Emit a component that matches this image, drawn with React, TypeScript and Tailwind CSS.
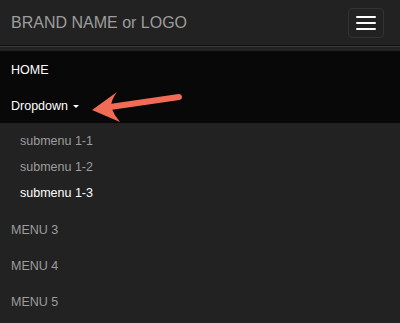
import React from 'react';

const font = { fontFamily: '"Liberation Sans", Arial, sans-serif' };

const submenu = [
  { label: 'submenu 1-1', active: false },
  { label: 'submenu 1-2', active: false },
  { label: 'submenu 1-3', active: true },
];

const App = () => {
  return (
    <div className="w-[400px] h-[323px] bg-[#222222] overflow-hidden" style={font}>
      {/* top bar */}
      <div className="h-[45px] flex items-center justify-between pl-[11px] pr-[16px]">
        <span className="text-[16px] text-[#9d9d9d] leading-none mt-[1px]">BRAND NAME or LOGO</span>
        <button className="w-[36px] h-[30px] border border-[#333333] rounded-[4px] flex flex-col items-center justify-center gap-[4px]">
          <span className="block w-[20px] h-[2px] bg-white rounded-[1px]" />
          <span className="block w-[20px] h-[2px] bg-white rounded-[1px]" />
          <span className="block w-[20px] h-[2px] bg-white rounded-[1px]" />
        </button>
      </div>

      <div className="border-t border-[#101010] shadow-[inset_0_1px_0_rgba(255,255,255,0.1)] pt-[5px]">
        {/* open section */}
        <div className="relative bg-[#080808]">
          <div className="h-[36px] flex items-center pt-[2px] px-[11px] text-[12.5px] text-white">HOME</div>
          <div className="h-[36px] flex items-center pt-[2px] px-[11px] text-[12.5px] text-white">
            Dropdown
            <span className="ml-[5px] mt-[1px] w-0 h-0 border-l-[3px] border-r-[3px] border-t-[3px] border-l-transparent border-r-transparent border-t-white" />
          </div>
          <svg className="absolute left-[88px] top-[38px]" width="100" height="36" viewBox="0 0 100 36">
            <line x1="91" y1="8" x2="22" y2="18" stroke="#f26b55" strokeWidth="6" strokeLinecap="round" />
            <path d="M4 21 L29 3 Q23 11 23 18 Q26 26 32 33 Z" fill="#f26b55" />
          </svg>
        </div>

        {/* submenu */}
        <div className="pt-[4px] pb-[6px]">
          {submenu.map((s) => (
            <div
              key={s.label}
              className={`h-[26px] flex items-center pt-[2px] pl-[20px] text-[12.5px] ${s.active ? 'text-white' : 'text-[#9d9d9d]'}`}
            >
              {s.label}
            </div>
          ))}
        </div>

        {['MENU 3', 'MENU 4', 'MENU 5'].map((m) => (
          <div key={m} className="h-[36px] flex items-center pt-[2px] px-[11px] text-[12.5px] text-[#9d9d9d]">
            {m}
          </div>
        ))}
      </div>
    </div>
  );
};

export default App;
